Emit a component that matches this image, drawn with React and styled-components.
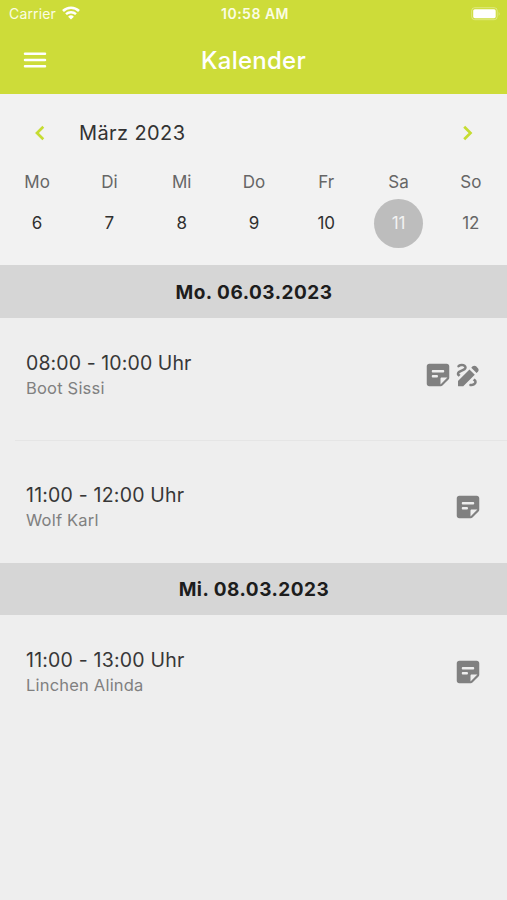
import React, { Fragment } from "react";
import styled, { createGlobalStyle } from "styled-components";

const GlobalStyle = createGlobalStyle`
  * {
    box-sizing: border-box;
  }

  body {
    margin: 0;
    background: #eeeeee;
    font-family: Inter, "Liberation Sans", sans-serif;
  }
`;

const Screen = styled.div`
  min-height: 900px;
  background: #eeeeee;
  color: #333;
`;

const Header = styled.header`
  height: 94px;
  background: #cddc39;
  color: #fff;
`;

const StatusBar = styled.div`
  display: grid;
  grid-template-columns: 1fr auto 1fr;
  align-items: center;
  height: 27px;
  padding: 0 6px 0 9px;
  font-size: 14px;
  line-height: 27px;
`;

const Carrier = styled.div`
  display: flex;
  align-items: center;
  gap: 6px;
  letter-spacing: 0.15px;
  color: #fbfde4;

  svg {
    margin-bottom: 1px;
  }
`;

const Clock = styled.span`
  font-size: 14px;
  font-weight: 600;
  letter-spacing: 0.5px;
  color: #fbfde4;
`;

const BatteryIcon = styled.svg`
  justify-self: end;
`;

const TitleBar = styled.div`
  display: grid;
  grid-template-columns: 50px 1fr 50px;
  align-items: center;
  height: 65px;
  padding: 0 20px;
`;

const MenuButton = styled.button`
  display: flex;
  padding: 0;
  border: 0;
  background: none;
  color: #fff;
`;

const Title = styled.h1`
  margin: 0;
  padding-top: 1px;
  font-size: 24px;
  font-weight: 500;
  letter-spacing: 0.25px;
  text-align: center;
`;

const Calendar = styled.section`
  height: 171px;
  background: #f2f2f2;
`;

const MonthBar = styled.div`
  display: flex;
  align-items: center;
  height: 78px;
  padding: 0 32px;
`;

const Month = styled.span`
  flex: 1;
  margin-left: 31px;
  font-size: 20px;
  letter-spacing: 0.4px;
  color: #333;
`;

const ArrowButton = styled.button`
  display: flex;
  padding: 0;
  border: 0;
  background: none;
`;

const Week = styled.div`
  display: grid;
  grid-template-columns: repeat(7, 1fr);
  padding-left: 1px;
`;

const Day = styled.div`
  display: flex;
  flex-direction: column;
  align-items: center;
`;

const DayName = styled.span`
  height: 20px;
  font-size: 17px;
  line-height: 20px;
  color: #666;
`;

const DayNumber = styled.span`
  width: 49px;
  height: 49px;
  margin-top: 7px;
  border-radius: 50%;
  font-size: 17px;
  line-height: 49px;
  text-align: center;
  color: ${(props) => props.$color || "#303030"};
  background: ${(props) => (props.$active ? "#bdbdbd" : "transparent")};
`;

const DateHeading = styled.h2`
  height: ${(props) => props.$height}px;
  margin: 0;
  background: #d6d6d6;
  color: #1d1d1d;
  font-size: 19px;
  font-weight: 700;
  line-height: ${(props) => props.$height + 2}px;
  letter-spacing: 0.5px;
  text-indent: 1px;
  text-align: center;
`;

const Appointment = styled.div`
  display: flex;
  align-items: center;
  height: 122px;
  margin-left: 15px;
  padding: 0 24px 9px 11px;
  & + & {
    height: 123px;
    padding: 9px 24px 0 11px;
    border-top: 1px solid #e5e5e5;
  }
`;

const AppointmentText = styled.div`
  flex: 1;
  padding-top: 2px;
`;

const Time = styled.div`
  font-size: 19.5px;
  line-height: 25px;
  letter-spacing: ${(props) => props.$spacing || "0.1px"};
  font-kerning: none;
  color: #373737;
`;

const Person = styled.div`
  font-size: 16.5px;
  line-height: 25px;
  letter-spacing: 0.2px;
  color: #808080;
`;

const AppointmentIcons = styled.div`
  display: flex;
  color: #808080;
`;

const days = [
  { name: "Mo", number: 6 },
  { name: "Di", number: 7 },
  { name: "Mi", number: 8 },
  { name: "Do", number: 9 },
  { name: "Fr", number: 10 },
  { name: "Sa", number: 11, color: "#f2f2f2", active: true },
  { name: "So", number: 12, color: "#666" },
];

const groups = [
  {
    date: "Mo. 06.03.2023",
    height: 53,
    items: [
      { time: "08:00 - 10:00 Uhr", person: "Boot Sissi", signed: true },
      { time: "11:00 - 12:00 Uhr", person: "Wolf Karl", spacing: "0.2px" },
    ],
  },
  {
    date: "Mi. 08.03.2023",
    height: 52,
    items: [
      { time: "11:00 - 13:00 Uhr", person: "Linchen Alinda", spacing: "0.2px" },
    ],
  },
];

const Wifi = () => (
  <svg width="18" height="14" viewBox="0 0 18 14" fill="none">
    <path d="M1 5a11.5 11.5 0 0 1 16 0" stroke="#fff" strokeWidth="2.6" />
    <path d="M4 8.2a7.2 7.2 0 0 1 10 0" stroke="#fff" strokeWidth="2.4" />
    <path d="M9 13.6 6.1 10.7a4.1 4.1 0 0 1 5.8 0z" fill="#fff" />
  </svg>
);

const Battery = () => (
  <BatteryIcon width="31" height="14" viewBox="0 0 31 14">
    <rect x="1.7" y="0.7" width="25.5" height="12" rx="3" fill="none" stroke="#fff" strokeOpacity="0.35" />
    <rect x="3.2" y="2.2" width="22.5" height="9" rx="1.6" fill="#fff" />
    <path d="M28.7 4.5q1.8 2.2 0 4.4z" fill="#fff" fillOpacity="0.4" />
  </BatteryIcon>
);

const MenuIcon = () => (
  <svg width="30" height="30" viewBox="0 0 24 24">
    <path
      d="M4 7h16M4 12h16M4 17h16"
      stroke="currentColor"
      strokeWidth="2"
      strokeLinecap="round"
    />
  </svg>
);

const NoteIcon = () => (
  <svg width="30" height="30" viewBox="0 0 24 24" fill="currentColor">
    <path
      fillRule="evenodd"
      d="M5 3h14c1.1 0 2 .9 2 2v9.17c0 .53-.21 1.04-.59 1.42l-4.82 4.82c-.38.38-.89.59-1.42.59H5c-1.1 0-2-.9-2-2V5c0-1.1.9-2 2-2zM8 8c-.55 0-1 .45-1 1s.45 1 1 1h8c.55 0 1-.45 1-1s-.45-1-1-1zM8 12c-.55 0-1 .45-1 1s.45 1 1 1h3c.55 0 1-.45 1-1s-.45-1-1-1zM14 19.5 19.5 14H15c-.55 0-1 .45-1 1z"
    />
  </svg>
);

const SignatureIcon = () => (
  <svg width="30" height="30" viewBox="0 0 24 24" fill="currentColor">
    <path d="M18.85 10.39l1.06-1.06c.78-.78.78-2.05 0-2.83L18.5 5.09c-.78-.78-2.05-.78-2.83 0l-1.06 1.06z" />
    <path d="M13.19 7.56 4.15 16.61c-.1.1-.15.22-.15.35v3.54c0 .28.22.5.5.5h3.54c.13 0 .26-.05.35-.15l9.04-9.04z" />
    <path d="M19 17.5c0 2.19-2.54 3.5-5 3.5-.55 0-1-.45-1-1s.45-1 1-1c1.54 0 3-.73 3-1.5 0-.47-.48-.87-1.23-1.2l1.48-1.48c1.07.63 1.75 1.47 1.75 2.68z" />
    <path d="M4.58 13.35C3.61 12.79 3 12.06 3 11c0-1.8 1.89-2.63 3.56-3.36C7.59 7.18 9 6.56 9 6c0-.41-.78-1-2-1-1.26 0-1.8.61-1.83.64-.35.41-.98.46-1.4.12-.41-.34-.49-.95-.15-1.38C3.73 4.24 4.76 3 7 3s4 1.32 4 3c0 1.87-1.93 2.72-3.64 3.47C6.42 9.88 5 10.5 5 11c0 .31.43.6 1.07.86z" />
  </svg>
);

const Arrow = ({ label, d }) => (
  <ArrowButton aria-label={label}>
    <svg width="16" height="16" viewBox="0 0 16 16" fill="none">
      <path d={d} stroke="#c6dc32" strokeWidth="2.7" />
    </svg>
  </ArrowButton>
);

function App() {
  return (
    <Screen>
      <GlobalStyle />
      <Header>
        <StatusBar>
          <Carrier>
            Carrier
            <Wifi />
          </Carrier>
          <Clock>10:58 AM</Clock>
          <Battery />
        </StatusBar>
        <TitleBar>
          <MenuButton aria-label="Menü">
            <MenuIcon />
          </MenuButton>
          <Title>Kalender</Title>
        </TitleBar>
      </Header>

      <Calendar>
        <MonthBar>
          <Arrow label="Zurück" d="M11.3 1.8 5 8l6.3 6.2" />
          <Month>März 2023</Month>
          <Arrow label="Weiter" d="M5.2 1.8 11.5 8l-6.3 6.2" />
        </MonthBar>
        <Week>
          {days.map((day) => (
            <Day key={day.name}>
              <DayName>{day.name}</DayName>
              <DayNumber $color={day.color} $active={day.active}>
                {day.number}
              </DayNumber>
            </Day>
          ))}
        </Week>
      </Calendar>

      {groups.map((group) => (
        <Fragment key={group.date}>
          <DateHeading $height={group.height}>{group.date}</DateHeading>
          {group.items.map((item) => (
            <Appointment key={item.time}>
              <AppointmentText>
                <Time $spacing={item.spacing}>{item.time}</Time>
                <Person>{item.person}</Person>
              </AppointmentText>
              <AppointmentIcons>
                <NoteIcon />
                {item.signed && <SignatureIcon />}
              </AppointmentIcons>
            </Appointment>
          ))}
        </Fragment>
      ))}
    </Screen>
  );
}

export default App;
